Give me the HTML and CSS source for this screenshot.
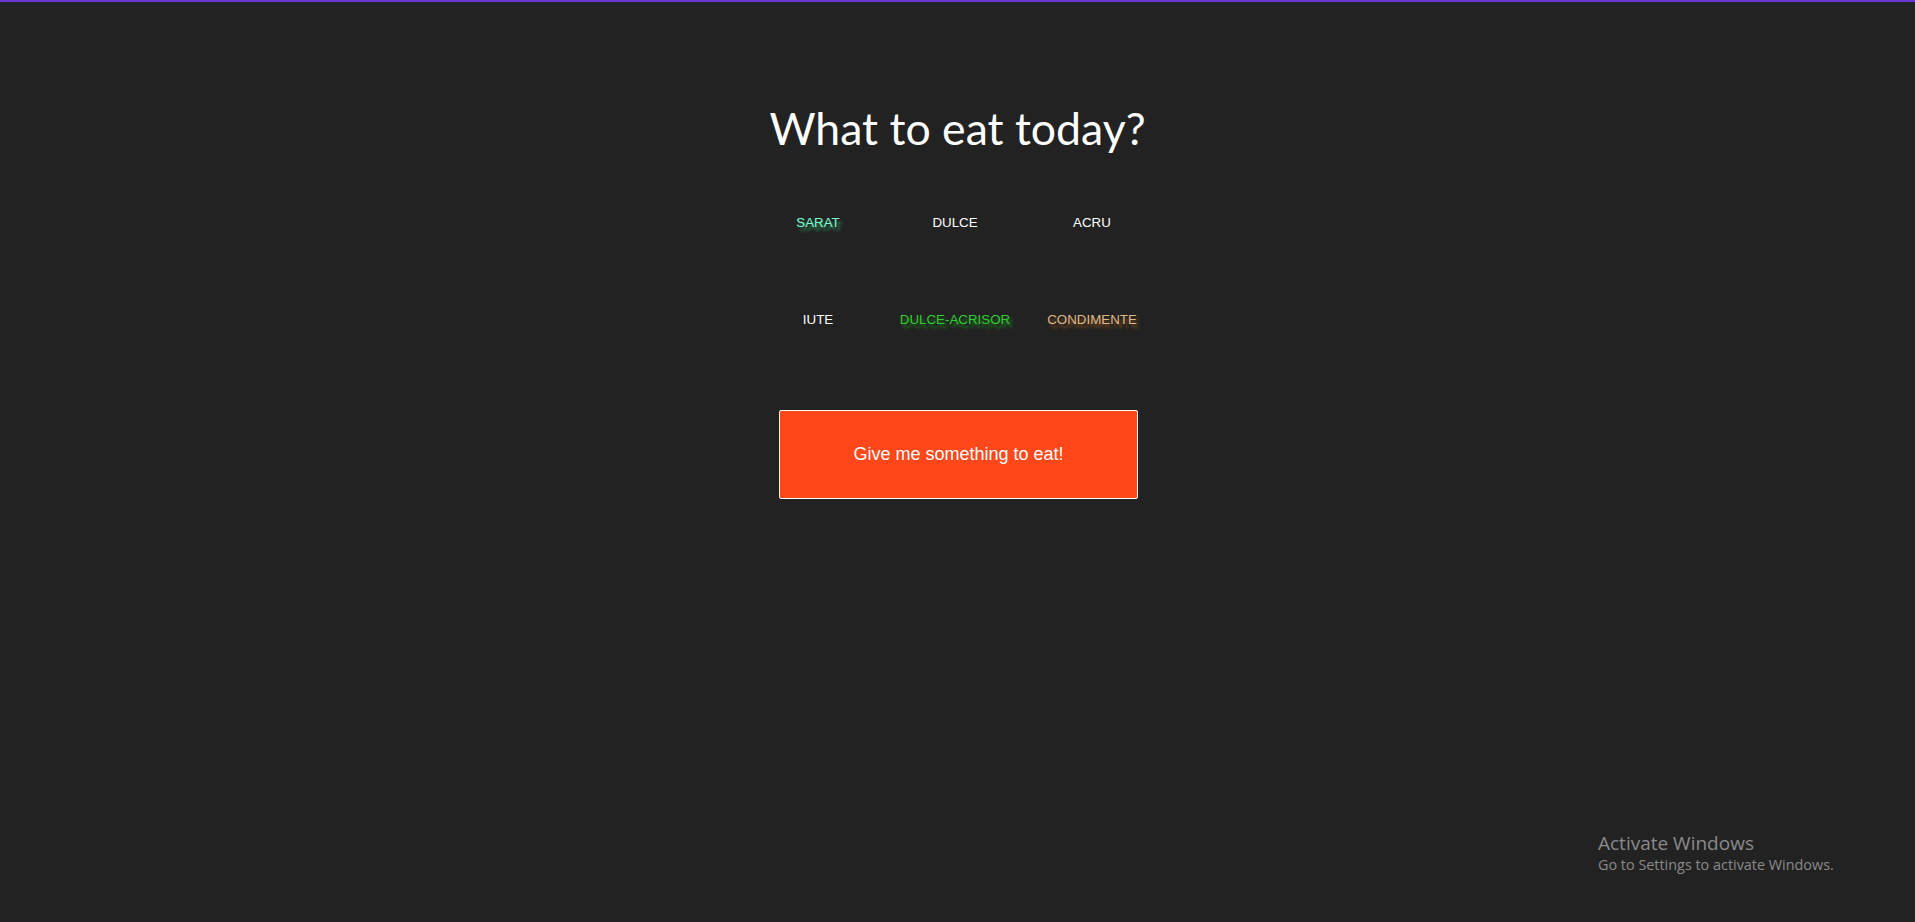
FILE: index.html
```html
<!DOCTYPE html>
<html lang="en">
<head>
<meta charset="utf-8">
<title>What to eat today?</title>
<link rel="stylesheet" href="styles.css">
</head>
<body>
<div class="topbar"></div>
<main class="page">
  <h1 class="title">What to eat today?</h1>
  <div class="tastes">
    <span class="taste taste-sarat">SARAT</span>
    <span class="taste">DULCE</span>
    <span class="taste">ACRU</span>
    <span class="taste">IUTE</span>
    <span class="taste taste-dulce-acrisor">DULCE-ACRISOR</span>
    <span class="taste taste-condimente">CONDIMENTE</span>
  </div>
  <button class="eat-btn" type="button">Give me something to eat!</button>
</main>
<div class="watermark">
  <div class="wm-title">Activate Windows</div>
  <div class="wm-sub">Go to Settings to activate Windows.</div>
</div>
</body>
</html>
```
FILE: styles.css
```css
html, body {
  margin: 0;
  padding: 0;
  height: 100%;
}
body {
  background: #222222;
  color: #ffffff;
  font-family: "Liberation Sans", Arial, sans-serif;
  overflow: hidden;
}
.topbar {
  height: 2px;
  background: #6a36d4;
}
.page {
  display: flex;
  flex-direction: column;
  align-items: center;
}
.title {
  margin: 100px 0 0;
  font-family: Lato, "Open Sans", sans-serif;
  font-weight: 400;
  font-size: 44.6px;
  line-height: 52px;
  color: #ffffff;
}
.tastes {
  margin-top: 61px;
  display: grid;
  grid-template-columns: repeat(3, 137px);
  grid-auto-rows: 97px;
  margin-left: -5px;
}
.taste {
  font-size: 13.333px;
  line-height: 16px;
  text-align: center;
  color: #ffffff;
}
.taste-sarat {
  color: #7fffd4;
  text-shadow: 3px 4px 3px #2e8b57;
}
.taste-dulce-acrisor {
  color: #32cd32;
  text-shadow: 3px 4px 3px #1f7a1f;
}
.taste-condimente {
  color: #deb887;
  text-shadow: 3px 4px 3px #7a4a1e;
}
.eat-btn {
  margin-top: 1px;
  width: 359px;
  height: 89px;
  background: #ff4719;
  color: #ffffff;
  border: 1px solid #ffffff;
  border-radius: 2px;
  font-family: "Liberation Sans", Arial, sans-serif;
  font-size: 18px;
  cursor: pointer;
  margin-left: 2px;
}
.watermark {
  position: absolute;
  left: 1598px;
  top: 830px;
  color: #8a8a8a;
  font-family: "Open Sans", "Noto Sans", sans-serif;
}
.wm-title {
  font-size: 19px;
  line-height: 26px;
}
.wm-sub {
  font-size: 14.4px;
  line-height: 18px;
}
```
